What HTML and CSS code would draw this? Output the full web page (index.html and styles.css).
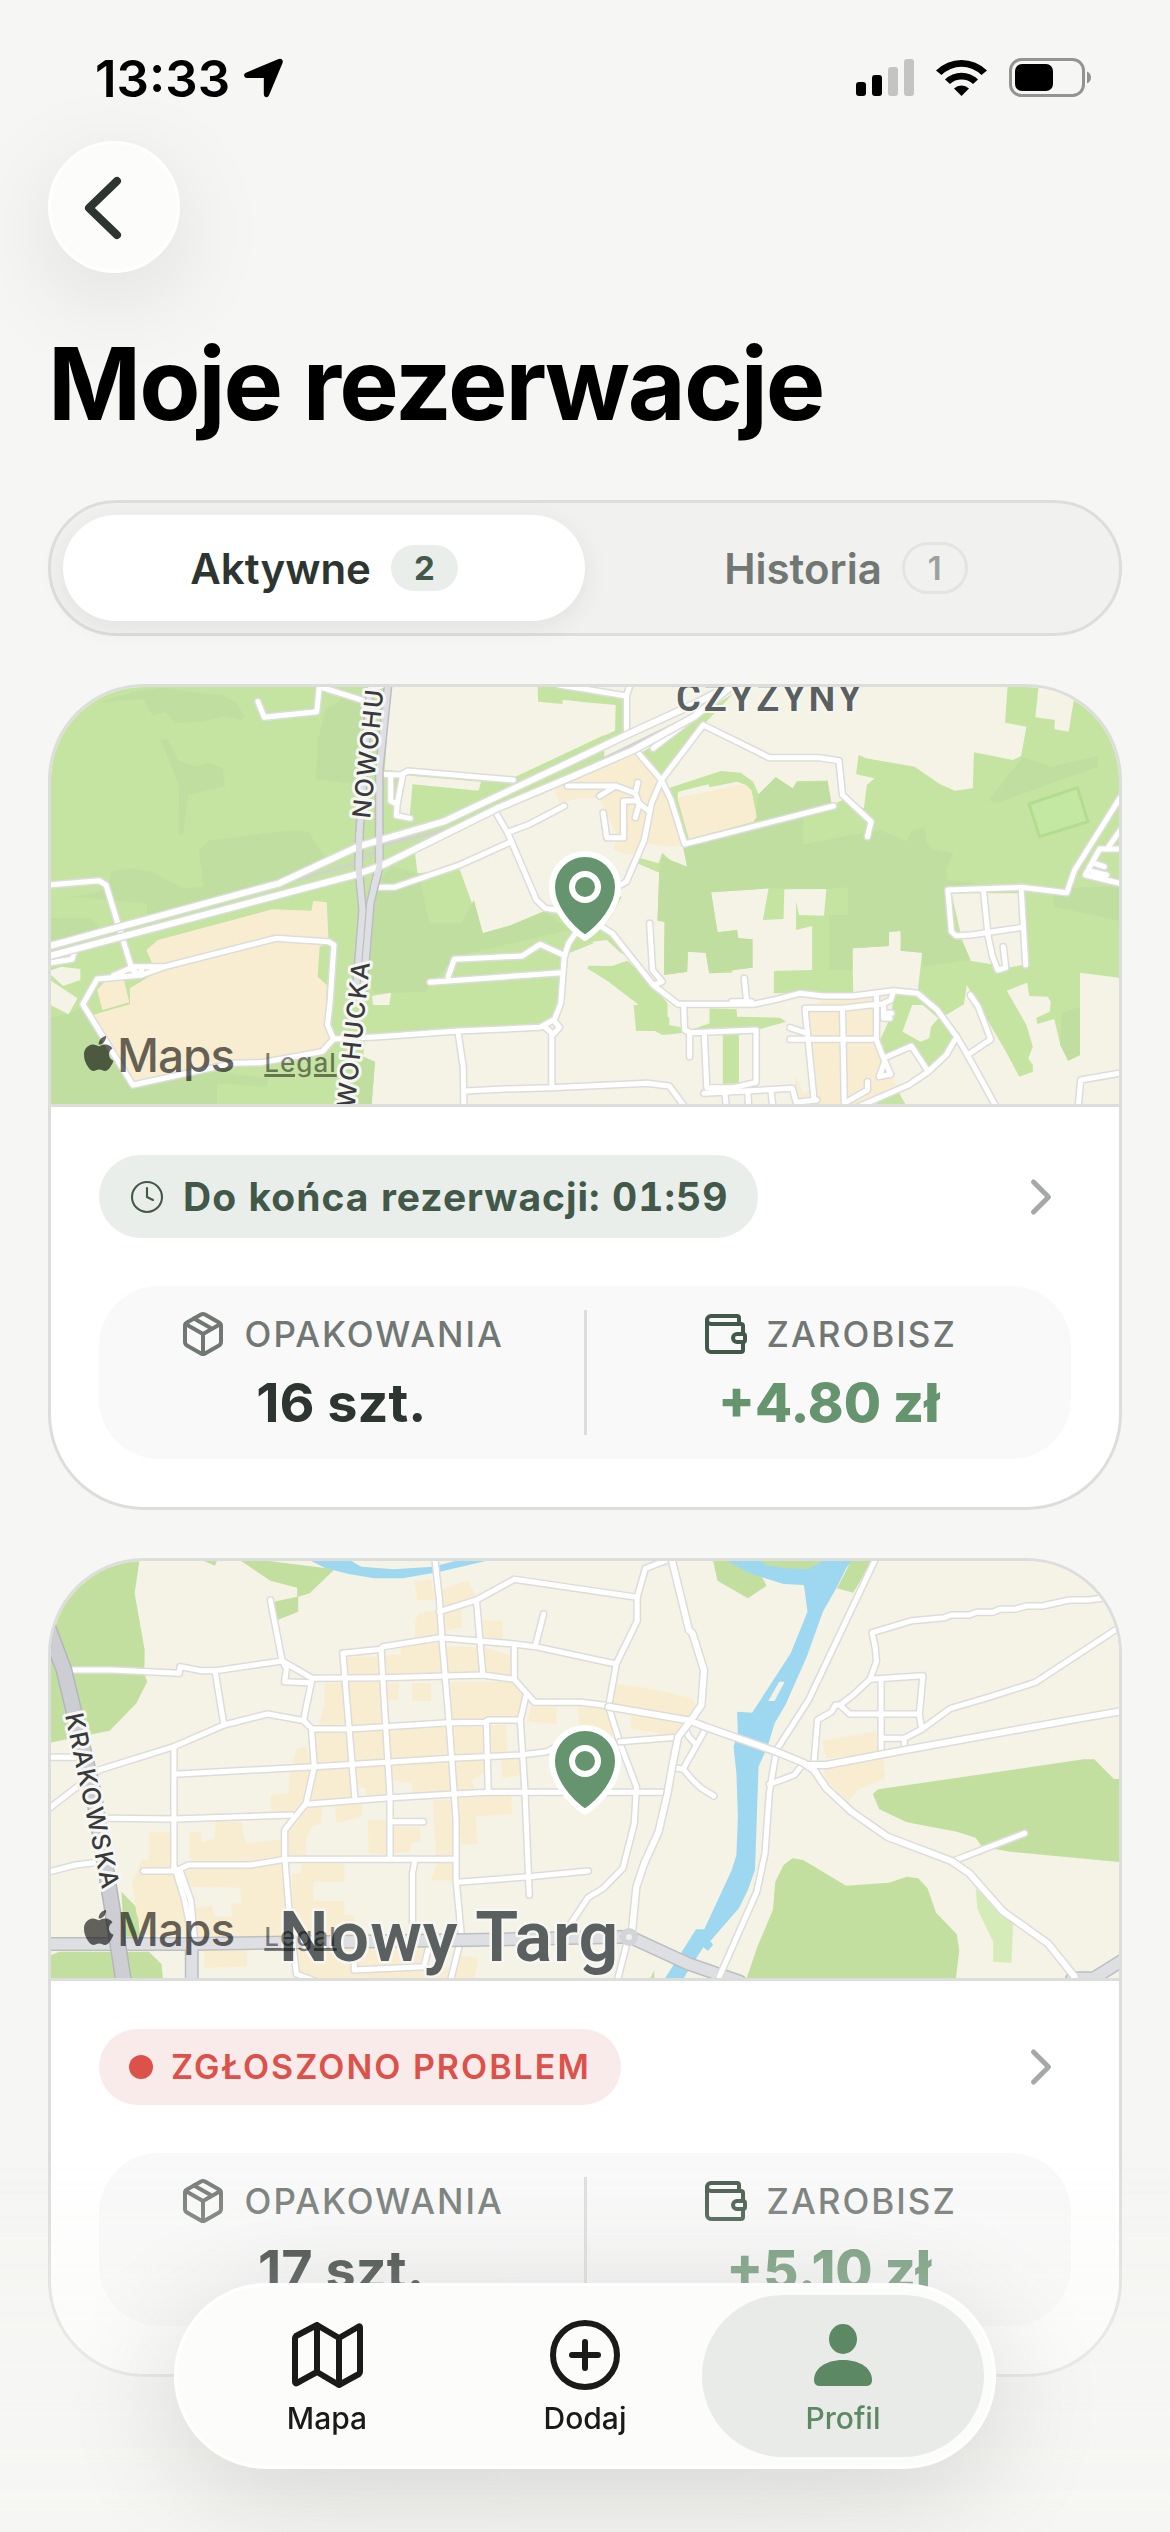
FILE: index.html
```html
<!DOCTYPE html>
<html lang="pl">
<head>
  <meta charset="UTF-8" />
  <meta name="viewport" content="width=device-width, initial-scale=1" />
  <title>Moje rezerwacje</title>
  <link rel="stylesheet" href="styles.css">
</head>
<body>

  <!-- shared icons -->
  <svg class="sprite" aria-hidden="true">
    <symbol id="i-package" viewBox="0 0 24 24">
      <path d="M11 21.73a2 2 0 0 0 2 0l7-4A2 2 0 0 0 21 16V8a2 2 0 0 0-1-1.73l-7-4a2 2 0 0 0-2 0l-7 4A2 2 0 0 0 3 8v8a2 2 0 0 0 1 1.73z"/>
      <path d="M12 22V12M3.29 7 12 12l8.71-5M7.5 4.27l9 5.15"/>
    </symbol>
    <symbol id="i-wallet" viewBox="0 0 24 24">
      <path d="M19 7V4a1 1 0 0 0-1-1H5a2 2 0 0 0 0 4h15a1 1 0 0 1 1 1v4h-3a2 2 0 0 0 0 4h3a1 1 0 0 0 1-1v-2a1 1 0 0 0-1-1"/>
      <path d="M3 5v14a2 2 0 0 0 2 2h15a1 1 0 0 0 1-1v-4"/>
    </symbol>
    <symbol id="i-chevron" viewBox="0 0 24 24"><path d="m9 18 6-6-6-6"/></symbol>
    <symbol id="i-pin" viewBox="0 0 72 90">
      <path d="M36 87C52 76 69 56 69 36a33 33 0 0 0-66 0c0 20 17 40 33 51z" fill="#66946e" stroke="#fff" stroke-width="6" stroke-linejoin="round"/>
      <circle cx="36" cy="36" r="13" fill="none" stroke="#fff" stroke-width="6"/>
    </symbol>
    <symbol id="i-apple" viewBox="0 0 30 36">
      <path d="M22 0c.3 2.200-.6 4.300-1.900 5.900-1.300 1.600-3.400 2.800-5.400 2.700-.3-2.100.7-4.300 1.900-5.700C18 1.300 20.200.1 22 0zM28.500 12.500c-2.200 1.300-3.500 3.300-3.500 6 0 3 1.800 5.300 4.500 6.300-.6 1.900-1.500 3.700-2.700 5.400-1.600 2.300-3.200 4.700-5.700 4.700-2.400 0-3.100-1.500-5.900-1.500-2.700 0-3.600 1.500-5.800 1.600-2.400.1-4.200-2.500-5.800-4.800C.4 25.700-1.700 17.300 1.700 12.600c1.600-2.400 4.300-3.900 7.200-4 2.300 0 4.400 1.600 5.900 1.600 1.400 0 4-1.900 6.800-1.600 1.200 0 4.800.5 6.900 3.900z"/>
    </symbol>
  </svg>

  <div class="status-bar">
    <div class="status-left">
      <span>13:33</span>
      <svg width="42" height="42" viewBox="0 0 42 42" aria-hidden="true"><path d="M37 3c1.800-.8 3.300.6 2.600 2.500L26 38c-.8 1.800-3.200 1.500-3.200-.7V21c0-.7-.3-1-1-1H5c-2.200 0-2.600-2.500-.7-3.400z" stroke="#000" stroke-width="2" stroke-linejoin="round"/></svg>
    </div>
    <div class="status-right" aria-hidden="true">
      <svg width="58" height="40" viewBox="0 0 58 40">
        <rect x="0" y="24" width="10" height="14" rx="3"/>
        <rect x="16" y="17" width="10" height="21" rx="3"/>
        <rect x="32" y="9" width="10" height="29" rx="3" fill="#c4c5c3"/>
        <rect x="48" y="1" width="10" height="37" rx="3" fill="#c4c5c3"/>
      </svg>
      <svg width="51" height="40" viewBox="0 0 51 40">
        <path d="M0 12.500a36 36 0 0 1 51 0L45.500 17a28.500 28.500 0 0 0-40 0z"/>
        <path d="M9 21.500a23.500 23.500 0 0 1 33 0L37 26a17 17 0 0 0-23 0z"/>
        <path d="M18 30.500a11 11 0 0 1 15 0L25.500 38z"/>
      </svg>
      <svg width="84" height="40" viewBox="0 0 84 40">
        <rect x="1.500" y="1.500" width="73" height="36" rx="11" fill="none" stroke="#939492" stroke-width="3"/>
        <rect x="6" y="6" width="38" height="27" rx="7"/>
        <path d="M78 13.500c2.500.8 4 3.200 4 6s-1.500 5.200-4 6z" fill="#939492"/>
      </svg>
    </div>
  </div>

  <main class="screen">
    <button class="back" type="button" aria-label="Wstecz">
      <svg width="66" height="66" viewBox="0 0 66 66"><path d="M36 7 8 34l28 27"/></svg>
    </button>

    <h1>Moje rezerwacje</h1>

    <div class="tabs" role="tablist">
      <button class="tab active" type="button" role="tab" aria-selected="true">Aktywne <span class="count">2</span></button>
      <button class="tab" type="button" role="tab" aria-selected="false">Historia <span class="count">1</span></button>
    </div>

    <article class="card">
      <div class="map">
        <svg class="map-art" viewBox="0 0 1068 417" preserveAspectRatio="xMidYMid slice" aria-hidden="true">
          <defs>
            <g id="a-main">
              <path d="M20 830 670 640 890 530 1130 455 1512 262 1642 195 1842 97 1935 45M20 860 230 800 890 612 960 585 1280 415 1512 310 1662 240 1832 140 1940 45"/>
            </g>
            <g id="a-west">
              <path d="M610 95 628 142 775 125 782 50 915 95M958 313 1010 315 1030 303 1325 330M982 315V393L1000 403 998 437 1037 445M1015 318 1000 403M945 652H992L1175 585 1320 515M1275 425 1310 490 1390 690 1415 715 1445 720M1310 487 1370 463 1468 408"/>
              <path d="M20 645 165 632 185 645 258 900 285 915M20 880 90 868 95 850M160 927 285 915 350 890 660 805 808 815 823 825 812 1000 805 1065 822 1107 790 1145 620 1178 540 1180 260 1245 120 1003zM205 917 262 890H350M285 895V915"/>
              <path d="M822 1107 950 1100 1170 1083 1400 1072 1437 1050 1455 1072 1437 1093 1415 1072M1170 1083 1185 1190 1187 1310M1190 1263 1300 1257 1430 1253 1700 1240 1762 1248 1805 1310M1433 1090V1253M1440 1050 1458 1000 1468 860 1480 820 1512 770M1143 920 1160 868 1350 858 1400 823 1470 857M1092 937 1460 908"/>
            </g>
            <g id="a-east">
              <path d="M130 190V78L0 55-60 45M130 78 140 45M205 235 320 140M160 245 228 330 255 390 293 522 710 408M345 165 228 330 200 400 180 510 130 635 105 650M345 165 530 263H670L725 272 735 375 815 455 805 500"/>
              <path d="M-35 348H100L155 370 165 400 195 425M55 378 100 348M162 338 155 370M155 443 165 405M155 393H122V503H75L65 428"/>
              <path d="M60 770 90 790 205 945 275 1003H485L550 988 615 970 680 978H765L878 962 945 970 1000 1020 1055 1100 1085 1155 1165 1310M195 760 203 900 230 935 205 945M460 925 467 1000M425 995H480"/>
              <path d="M290 1003 293 1080 310 1088 493 1080V1237L430 1253H355L348 1095M307 1088V1160M347 1270 595 1255 605 1297 663 1290M405 1265 410 1310M470 1265 472 1310M535 1265 540 1310"/>
              <path d="M655 1285 630 1015H735L830 1003V1110L850 1165 928 1128 975 1205M735 1015 740 1300 805 1260V1235M588 1108H830M588 1073 635 1090M830 975V1003H845L870 990 878 965M850 1003 850 1045H868M853 1030H873M850 1165 870 1213 838 1220 853 1175M780 1310 920 1245 975 1205 1025 1155 1055 1100M1085 1155 1150 1108 1115 1010 1093 975"/>
              <path d="M1363 668 1235 652 1030 660 1040 785 1053 797 1095 795 1240 772M1130 665 1143 800 1155 860 1170 900 1192 893 1185 830M1235 652 1248 885M1363 668 1385 600 1520 370M1520 642 1415 615 1455 537H1520M1480 530 1520 470M1440 580 1468 590M1435 605 1475 615M1395 1310 1402 1230 1520 1208"/>
            </g>
          </defs>
          <rect class="land" width="1068" height="417"/>

          <!-- west half: meadows and allotments -->
          <g transform="translate(-11 -17) scale(.35714 .33333)">
            <path class="green" d="M0 0H985L965 300 1322 325 1580 195V290L1270 420 1050 550 1057 610 1175 598 1240 790 1320 765 1415 722 1480 740 1550 820 1480 850 1465 1000 1440 1060 1165 1080 910 1100 905 1160 938 1175 928 1310H0z"/>
            <path class="green" d="M1393 40H1460L1580 75V97L1463 90V102L1395 95z"/>
            <path class="green-dark" d="M165 97 290 87 315 137 350 125 380 158 450 155 520 138 560 150 575 140 545 95 510 75 450 70 350 53 280 60zM337 208H357L387 272 440 290 470 278 512 295 518 348 415 375 400 495H388L390 350 365 280zM445 545 470 512 715 480 755 487 770 520 800 560 680 640 300 740V700L100 682 40 690 165 665 190 650 200 605 250 595 310 605 400 655 458 650zM20 745H140L175 780 20 830zM860 75 905 90 880 340 772 328 778 210 800 120zM20 1045 80 1032 120 1010 250 1240 490 1205 640 1225 635 1250 495 1240V1310H20zM940 640 985 590 1060 610 1090 760H1180L1215 690 1240 790 1320 765 1415 722 1480 780 1400 800 1160 860 1080 965 935 970 905 880zM905 1160 938 1175 928 1310H860z"/>
            <path class="land" d="M1010 315 1235 335 1228 362 1043 343 1035 440 1000 430zM20 905 60 890 113 897V930L65 948zM20 925 105 985 80 1033 20 1000zM930 978 983 968 978 1005H932z"/>
            <path class="sand" d="M298 840 330 810 650 718 760 722 765 692 803 697 808 815 783 830 777 920 803 945 800 1075 815 1105 780 1140 520 1185 260 1240 148 1035 252 1003V955L350 890 315 883zM160 960 180 935 235 930 250 997 175 1020zM1440 355 1580 290V385L1510 385 1455 400z"/>
          </g>

          <!-- east half: parkland, estates -->
          <g transform="translate(529 -17) scale(.35714 .33333)">
            <path class="green" d="M-60 50 0 62 120 85V190L0 240V230L98 182 100 105 0 95-60 85zM170 250 430 70 345 165 228 325z"/>
            <path class="green" d="M247 355 395 303 450 308 485 335 500 373 548 322 595 355 608 333 693 332 705 405 735 390 795 415 803 345 825 325 773 313 780 255 800 265 937 290 1008 343 1050 362 1100 355 1103 247 1212 270 1235 258 1250 170 1190 158 1198 40H1285L1275 142 1330 150 1328 178 1368 185 1383 90 1400 40H1520V925L1400 908V1155L1367 1172 1345 1125 1328 1047 1280 1062 1278 1043 1315 1025 1318 995 1310 980 1258 978 1252 938 1195 962 1250 1065 1268 1130 1255 1165 1268 1185V1205L1230 1220 1190 1140 1083 945 1075 1003 1025 1035 985 1000 945 970 958 848 898 842V783L865 785V828L763 835 765 970H543V903L650 900V768L605 780V695L613 735 683 737 690 657 572 658 570 747 512 750 528 655 367 667 385 787 440 780 443 805 483 808V893L427 898 425 908 362 910 352 848 302 845 300 905 235 915 237 755 217 752 222 608 160 580 165 563 220 580 230 548 255 572 300 590 287 525z"/>
            <path class="green-dark" d="M290 530 625 445 625 523 840 480 915 515 930 480 965 470 970 515 990 540 1045 550 1025 600 1030 630 1110 640 1030 655 1040 790 1080 830 1090 870 960 890 958 848 898 842V783L865 785V828L763 835V900H697V735H750V652L690 657 528 655 367 667 385 787 440 780 443 805 483 808V893L362 910 352 848 302 845 300 905 235 915 237 755 217 752 222 608 230 560 300 590zM500 373 548 322 595 355 608 380 622 430 490 460zM1145 390 1240 262 1320 290 1450 258 1448 290 1165 400zM1325 655 1520 650V755L1460 740 1325 710zM605 340 693 332 703 398 622 425 595 360zM1350 1030 1400 1010V1155L1367 1172 1345 1125z"/>
            <path class="pitch" d="M1257 402 1393 353 1422 455 1287 500z"/>
            <path class="green" d="M150 1005H165L80 935 20 895 25 887 90 888 133 872 200 940 245 1000V1040L310 1080 362 1060V1015L438 1018 440 1040 560 1043 577 1055 495 1080 445 1095V1240L400 1242V1095L295 1088 230 1095 210 1083 157 1083zM0 820 75 810 112 847 135 860 65 770 90 735 117 680 60 680-20 800zM840 1110 870 1040 880 975 945 970 1000 1020 1053 1100 975 1205 925 1130 850 1165zM815 1310 890 1262 915 1310z"/>
            <path class="land" d="M930 1005H960L1003 1045 983 1070 978 1105 953 1115 903 1085zM275 365 360 343 362 352 440 335 465 345 273 385zM1040 670H1235L1240 885 1205 892 1095 873 1070 810zM250 1010H362V1060L310 1078 250 1065z"/>
            <path class="sand" d="M-20 310 150 250 228 335 245 390 275 500 285 525 240 530 190 520 145 555 92 540 105 500 60 400 55 385H-20zM273 385 440 345H465L480 360 495 440 485 455 305 508zM640 1025 675 990 865 975 830 1060 850 1165 870 1210 885 1245 790 1310H602V1218L628 1270 655 1250z"/>
          </g>

          <g transform="translate(-11 -17) scale(.35714 .33333)">
            <path class="rail" d="M720 630 880 580 935 545M960 525 1200 465 1580 265 1800 150"/>
            <use href="#a-west" class="casing"/>
            <use href="#a-west" class="road"/>
          </g>
          <g transform="translate(529 -17) scale(.35714 .33333)">
            <use href="#a-east" class="casing"/>
            <use href="#a-east" class="road"/>
          </g>
          <g transform="translate(-11 -17) scale(.35714 .33333)">
            <path class="highway-edge" d="M975 40 950 300V590L925 700 905 960M925 40 895 480 892 590 903 720 885 960"/>
            <path class="highway" d="M975 40 950 300V590L925 700 905 960M925 40 895 480 892 590 903 720 885 960"/>
            <use href="#a-main" class="casing wide"/>
            <use href="#a-main" class="road wide"/>
            <path class="highway" d="M950 480V590L935 650M894 490 892 590 897 650"/>
          </g>
          <text class="street" transform="translate(319 132) rotate(-84)">NOWOHUCKA</text>
          <text class="street" transform="translate(319 274) rotate(-84)" text-anchor="end">NOWOHUCKA</text>
          <text class="district" x="625" y="24">CZYŻYNY</text>
        </svg>
        <svg class="pin" width="72" height="90"><use href="#i-pin"/></svg>
        <div class="attribution">
          <svg width="30" height="36"><use href="#i-apple"/></svg>
          <span class="brand">Maps</span>
          <a href="#">Legal</a>
        </div>
      </div>

      <div class="card-body">
        <div class="card-row">
          <span class="pill timer">
            <svg width="36" height="36" viewBox="0 0 24 24" aria-hidden="true"><circle cx="12" cy="12" r="10"/><path d="M12 6v6l4 2"/></svg>
            Do końca rezerwacji: 01:59
          </span>
          <a class="more" href="#" aria-label="Szczegóły rezerwacji"><svg width="60" height="60"><use href="#i-chevron"/></svg></a>
        </div>
        <div class="stats">
          <div class="stat">
            <div class="stat-label"><svg width="48" height="48"><use href="#i-package"/></svg>OPAKOWANIA</div>
            <div class="stat-value">16 szt.</div>
          </div>
          <div class="stat earn">
            <div class="stat-label"><svg width="48" height="48"><use href="#i-wallet"/></svg>ZAROBISZ</div>
            <div class="stat-value">+4.80 zł</div>
          </div>
        </div>
      </div>
    </article>

    <article class="card">
      <div class="map">
        <svg class="map-art" viewBox="0 0 1068 417" preserveAspectRatio="xMidYMid slice" aria-hidden="true">
          <defs>
            <g id="b-west">
              <path d="M1105 50 1118 175 1125 290 1145 540 1165 840V1020L1180 1190 1150 1320M1118 215 1222 180 1328 118 1672 172M1222 180 1240 405M1410 222 1387 318M848 340 955 328 960 320 1120 293 1328 312 1387 320 1612 372M1328 312V415"/>
              <path d="M92 390H200L390 400 392 380 450 392H492L678 363 762 415 958 413 1240 405 1328 418 1385 487H1515L1592 497M645 180 678 363 690 385 685 425 755 428M20 810 165 690 375 620 515 555 637 522 738 542 762 567H865L1145 548 1245 547 1255 540H1345"/>
              <path d="M490 392 515 555M762 415 738 540M760 567 768 680 745 790 685 870V945L697 1110 718 1302 775 1325M848 340 865 560 882 778M955 328 980 770V955M1250 547 1255 755M1360 470 1345 540 1358 755 1370 1065"/>
              <path d="M375 703 768 680 1150 655 1345 645 1420 635 1445 620M745 793 980 773 1160 762 1255 757H1750M375 620V990M195 835 375 837 705 825M980 845H1073M290 993H380L415 975H590L685 958H1165M1050 960 1043 1000V1145M1170 1027 1370 1010 1535 993"/>
              <path d="M378 985 405 1080 425 1190M392 990 422 1080 432 1190M20 652H110M20 997 100 975 150 968M880 1260V1290L1075 1280 1090 1215M1480 1160 1535 1072 1577 1045 1632 985 1664 850 1670 740 1624 610 1592 500 1614 370 1672 243V172L1695 85 1757 60"/>
            </g>
            <g id="b-east">
              <path d="M828 55 640 480 550 630 530 760 518 940 495 1055 390 1310M112 605 270 592M295 570 305 590 325 615M350 570 290 685M262 683 290 688 315 720 340 745 375 768M530 733 600 705 625 672"/>
              <path d="M655 670 665 540 705 515 715 495H728L755 522H950M728 495 765 465 812 418 960 407 950 525 957 568M812 418 830 365 827 325 818 278 930 242 1020 233 1040 225H1090L1110 217H1155L1175 208 1220 207 1250 198H1295L1370 180H1425L1480 172M843 418V640M850 595H908L957 568 1038 505 1150 470 1275 427 1520 255M908 595V625M1040 965 1245 880M105 1320 130 1215"/>
            </g>
            <g id="b-main">
              <path d="M255 50 305 270 315 280 347 390 340 495 308 545 275 590 258 680 245 760 220 875 180 970 158 1040 145 1180M80 500 308 542 350 560 550 635 625 668 655 690 690 745 760 815 860 890 1040 963 1090 1000 1185 1115 1310 1210 1385 1310M635 675 690 675 910 630 1400 535 1520 513"/>
            </g>
          </defs>
          <rect class="land" width="1068" height="417"/>

          <!-- town centre blocks -->
          <g transform="translate(-11 -21) scale(.35714 .33333)">
            <path class="green-mid" d="M20 50H280L265 160 293 330 292 400 300 425 270 490 195 572 20 610zM430 50H500L490 77zM545 50 825 88 755 160 723 170V215L665 240 655 185 720 170V143L645 122zM228 1055 273 1105 280 1190H235zM20 1250 55 1235H305L340 1272 345 1320H20z"/>
            <path class="sand" d="M1047 125 1095 117 1107 178 1057 182zM1123 150 1198 120 1222 170 1125 205zM1060 220 1110 210 1125 290 1050 292V245zM1122 215 1180 200V262L1125 275zM1240 240 1295 243V305H1240zM860 350H950L955 405 862 403zM965 345 1010 345V320L1120 300 1130 405H960zM1135 320H1230L1235 405H1135zM1245 322 1325 350V405H1245z"/>
            <path class="sand" d="M797 430H850L865 560H760L780 555 797 490zM860 425H950L960 555 870 560zM970 430H1005V480H975zM1042 430H1095V483H1042zM1140 425H1325L1360 475 1345 535H1250L1145 545zM1375 500H1447V553L1365 545zM1505 500H1590L1605 590 1512 560z"/>
            <path class="sand" d="M770 580 865 575 870 665 770 672zM875 575 960 570 970 660 878 665zM975 565 1140 560 1150 650 975 660zM1150 560H1245L1250 645 1155 648zM1258 555H1305L1310 640 1260 645zM720 625 745 620 760 680 740 785 700 840 685 815H648L645 765 695 760 700 690zM775 688 868 685 880 775 750 785zM885 680H970V760L915 770 912 745 890 740zM985 675 1150 665 1155 755 1045 760 1040 730 985 720zM1165 665 1245 660 1250 690 1210 720 1215 745 1240 760H1165zM1290 655H1345V705L1295 715z"/>
            <path class="sand" d="M1165 775 1320 765V822L1220 830 1225 912 1180 915zM1100 780H1150L1160 950V1022L1095 1020 1110 975zM918 840H975V945L920 940zM985 860H1065V905L1040 910 1035 937 990 940zM690 870 745 800H790V850L760 860 745 900V950L690 945zM825 790 905 785 900 830 830 850z"/>
            <path class="sand" d="M258 1025 285 960H305V877H365L370 970 400 1080 420 1185H290L270 1120zM418 875H450L453 908 490 895 492 845H565L570 885 580 910 680 897V955L590 970 425 975 418 930zM390 990 590 980 685 965 690 1090H565L560 1043 420 1040zM535 1090H690L710 1190H540zM430 1105 480 1095 490 1130H540V1190H430zM705 1000H730L732 970H852V1025H765V1083H852V1125H880V1190H710zM460 1230H580V1280L460 1283zM720 1230 1090 1220 1075 1275 1145 1280 1140 1320H730zM1165 1245 1228 1255 1215 1320H1155z"/>
            <path class="water" d="M735 50H850L900 80 990 88 1100 80 1210 50H1300L1120 95 1015 115H935L865 102 800 85z"/>
          </g>

          <!-- river and woods -->
          <g transform="translate(529 -21) scale(.35714 .33333)">
            <path class="green-mid" d="M370 50H420L510 110 522 138 470 175 385 122zM765 50H825L765 158 720 145zM820 762 835 748 1410 658H1440L1495 717H1520V967L1205 935 1125 920 1108 893 1055 875 915 847 838 808zM465 1320 495 1225 540 1110 547 1025 570 975 595 955 625 960 745 1037 865 1028 915 1010 947 1015 973 1045 997 1118 1055 1183 1062 1230 1052 1320zM195 1320 208 1290V1320z"/>
            <path class="green-light" d="M1108 1045 1213 1150 1208 1268 1157 1265V1205L1113 1108z"/>
            <path class="sand" d="M102 432 180 443 250 458 310 475 325 495 305 540 92 495zM145 525 300 545 270 590 138 565zM678 603 830 573 833 640 690 655zM680 690 850 657 855 715 780 748 750 785 690 720z"/>
            <path class="water" d="M390 50H770L745 85 720 140 680 215 635 350 575 495 545 550 525 620 500 680 490 990 470 1050 445 1105 365 1203 373 1215 358 1232 345 1222 287 1320H235L325 1168H348L425 990 438 945 442 830 438 700 430 620 442 580 440 515 482 518 590 340 637 215 627 135 570 132 475 100z"/>
            <path class="green-mid" d="M490 50 520 75 575 85 640 87 700 50z"/>
            <path class="land" d="M558 425H573L545 483H527z"/>
          </g>

          <g transform="translate(-11 -21) scale(.35714 .33333)">
            <use href="#b-west" class="casing"/>
            <use href="#b-west" class="road"/>
            <path class="highway-edge bold" d="M20 1212H420L1200 1200 1650 1190 1812 1270 1960 1325M425 1212V1320M2890 1315H2950L3040 1255"/>
            <path class="highway bold" d="M20 1212H420L1200 1200 1650 1190 1812 1270 1960 1325M425 1212V1320M2890 1315H2950L3040 1255"/>
            <path class="trunk-edge" d="M25 270 67 390 150 760 200 1090 235 1330"/>
            <path class="trunk" d="M25 270 67 390 150 760 200 1090 235 1330"/>
          </g>
          <g transform="translate(529 -21) scale(.35714 .33333)">
            <use href="#b-east" class="casing"/>
            <use href="#b-east" class="road"/>
            <use href="#b-main" class="casing wide"/>
            <use href="#b-main" class="road wide"/>
          </g>
          <circle cx="578" cy="376" r="6" fill="#eef0ec" stroke="#d3d4d8" stroke-width="6"/>
          <text class="street" transform="translate(14 154) rotate(78)">KRAKOWSKA</text>
          <text class="town" x="228" y="400">Nowy Targ</text>
        </svg>
        <svg class="pin" width="72" height="90"><use href="#i-pin"/></svg>
        <div class="attribution">
          <svg width="30" height="36"><use href="#i-apple"/></svg>
          <span class="brand">Maps</span>
          <a href="#">Legal</a>
        </div>
      </div>

      <div class="card-body">
        <div class="card-row">
          <span class="pill problem"><span class="dot"></span>ZGŁOSZONO PROBLEM</span>
          <a class="more" href="#" aria-label="Szczegóły rezerwacji"><svg width="60" height="60"><use href="#i-chevron"/></svg></a>
        </div>
        <div class="stats">
          <div class="stat">
            <div class="stat-label"><svg width="48" height="48"><use href="#i-package"/></svg>OPAKOWANIA</div>
            <div class="stat-value">17 szt.</div>
          </div>
          <div class="stat earn">
            <div class="stat-label"><svg width="48" height="48"><use href="#i-wallet"/></svg>ZAROBISZ</div>
            <div class="stat-value">+5.10 zł</div>
          </div>
        </div>
      </div>
    </article>
  </main>

  <div class="fade"></div>

  <nav class="tabbar">
    <a href="#">
      <svg width="72" height="72" viewBox="0 0 72 72" class="line"><path d="M4 19v44c0 1 1 2 2 1l20-11 22 13 20-11c1-1 1-1 1-2V9c0-2-1-2-2-1L48 19 26 6 5 17c-1 1-1 1-1 2zM26 6v47M48 19v47"/></svg>
      Mapa
    </a>
    <a href="#">
      <svg width="72" height="72" viewBox="0 0 72 72" class="line"><circle cx="36" cy="36" r="32"/><path d="M36 23v26M23 36h26"/></svg>
      Dodaj
    </a>
    <a href="#" class="active" aria-current="page">
      <svg width="72" height="72" viewBox="0 0 72 72" fill="currentColor"><ellipse cx="36" cy="20" rx="14" ry="15"/><path d="M7 61c0-11 11-20 29-20s29 9 29 20c0 4-2 6-6 6H13c-4 0-6-2-6-6z"/></svg>
      Profil
    </a>
  </nav>

</body>
</html>
```
FILE: styles.css
```css
* {
  box-sizing: border-box;
}

body {
  margin: 0;
  min-height: 100vh;
  font-family: Inter, "Liberation Sans", sans-serif;
  background: #f6f6f4;
  color: #2d3530;
}

button {
  font: inherit;
  border: none;
  cursor: pointer;
}

a {
  color: inherit;
  text-decoration: none;
}

svg {
  display: block;
  flex: none;
}

.sprite {
  position: absolute;
  width: 0;
  height: 0;
}

/* status bar */
.status-bar {
  display: flex;
  justify-content: space-between;
  align-items: center;
  height: 141px;
  padding: 15px 77px 0 95px;
  color: #000;
}

.status-left,
.status-right {
  display: flex;
  align-items: center;
}

.status-left {
  gap: 12px;
  font-size: 51px;
  font-weight: 600;
}

.status-right {
  gap: 22px;
}

/* header */
.screen {
  padding: 0 48px 96px;
}

.back {
  display: flex;
  align-items: center;
  justify-content: center;
  width: 132px;
  height: 132px;
  padding: 0;
  border: 3px solid #fff;
  border-radius: 50%;
  background: #fcfdfa;
  box-shadow: 0 24px 96px rgba(0, 0, 0, 0.1);
}

.back svg {
  fill: none;
  stroke: #2d3530;
  stroke-width: 8;
  stroke-linecap: round;
  stroke-linejoin: round;
}

h1 {
  margin: 51px 0 56px;
  font-size: 100px;
  font-weight: 700;
  line-height: 120px;
  letter-spacing: -2px;
  color: #000;
}

.tabs {
  display: flex;
  padding: 12px;
  border: 3px solid #dcdedb;
  border-radius: 68px;
  background: #f1f1ef;
  margin-bottom: 48px;
}

.tab {
  display: flex;
  flex: 1;
  align-items: center;
  justify-content: center;
  gap: 20px;
  height: 106px;
  padding: 0;
  border-radius: 53px;
  background: none;
  font-size: 42px;
  font-weight: 600;
  color: #717873;
}

.tab.active {
  background: #fff;
  color: #2d3530;
  box-shadow: 0 6px 24px rgba(45, 53, 48, 0.08);
}

.count {
  padding: 3px 23px;
  border: 3px solid #e4e5e2;
  border-radius: 26px;
  font-size: 33px;
  font-weight: 600;
  line-height: 40px;
  color: #9ca19d;
}

.tab.active .count {
  border: none;
  background: #e9eeea;
  font-weight: 700;
  color: #42594a;
}

/* reservation card */
.card {
  margin-bottom: 48px;
  border: 3px solid #dcdedb;
  border-radius: 96px;
  background: #fff;
  overflow: hidden;
}

.map {
  position: relative;
  border-bottom: 3px solid #dcdedb;
  overflow: hidden;
}

.map-art {
  width: 100%;
  aspect-ratio: 1068 / 417;
}

.map-art path {
  vector-effect: non-scaling-stroke;
}

.land { fill: #f5f2e6; }
.green { fill: #c5e4a1; }
.green-mid { fill: #c3dfa0; }
.green-dark { fill: #bfde9f; }
.green-light { fill: #d5ecb8; }
.sand { fill: #f9edd1; }
.water { fill: #9dd8f0; }

.pitch {
  fill: #c3e8a2;
  stroke: #b3dc90;
  stroke-width: 3;
}

.casing,
.road,
.rail,
.highway,
.highway-edge,
.trunk,
.trunk-edge {
  fill: none;
  stroke-linecap: round;
  stroke-linejoin: round;
}

.casing {
  stroke: #dcdddb;
  stroke-width: 8;
}

.road {
  stroke: #fff;
  stroke-width: 5;
}

.casing.wide { stroke-width: 9; }
.road.wide { stroke-width: 6; }

.rail {
  stroke: #d0d2cd;
  stroke-width: 3;
}

.highway-edge {
  stroke: #bcbec2;
  stroke-width: 9;
}

.highway {
  stroke: #dedfe3;
  stroke-width: 6;
}

.highway-edge.bold { stroke-width: 14; }
.highway.bold { stroke-width: 11; }

.trunk-edge {
  stroke: #b4b6ba;
  stroke-width: 17;
}

.trunk {
  stroke: #cdced3;
  stroke-width: 14;
}

.map-art text {
  paint-order: stroke;
  stroke: #f6f7f3;
  stroke-linejoin: round;
}

.street {
  font-size: 25px;
  font-weight: 500;
  letter-spacing: 2px;
  fill: #3a3a3c;
  stroke-width: 6px;
}

.district {
  font-family: Roboto, sans-serif;
  font-size: 38px;
  font-weight: 600;
  letter-spacing: 3px;
  fill: #5a5f60;
  stroke-width: 4px;
}

.town {
  font-family: Roboto, sans-serif;
  font-size: 70px;
  font-weight: 600;
  letter-spacing: 1px;
  fill: #5a5f60;
  stroke-width: 5px;
}

.pin {
  position: absolute;
  top: 50%;
  left: 50%;
  margin: -45px 0 0 -36px;
}

.attribution {
  position: absolute;
  left: 33px;
  bottom: 22px;
  display: flex;
  align-items: baseline;
  color: rgba(0, 0, 0, 0.6);
}

.attribution svg {
  fill: currentColor;
}

.brand {
  margin: 0 30px 0 3px;
  font-size: 46px;
  font-weight: 500;
  line-height: 54px;
  letter-spacing: -1px;
}

.attribution a {
  font-size: 26px;
  font-weight: 500;
  letter-spacing: 1px;
  text-decoration: underline;
  text-decoration-thickness: 3px;
  opacity: 0.8;
}

.card-body {
  padding: 48px;
}

.card-row {
  display: flex;
  align-items: center;
  justify-content: space-between;
  margin-bottom: 48px;
}

.pill {
  display: flex;
  align-items: center;
  gap: 18px;
  padding: 18px 30px;
  border-radius: 42px;
  font-weight: 700;
}

.timer {
  background: #e9eeea;
  font-size: 39px;
  line-height: 47px;
  letter-spacing: 1px;
  font-variant-numeric: tabular-nums;
  color: #42594a;
}

.timer svg {
  fill: none;
  stroke: currentColor;
  stroke-width: 1.4;
  stroke-linecap: round;
}

.problem {
  background: #faebeb;
  font-size: 34px;
  font-weight: 600;
  line-height: 40px;
  letter-spacing: 2px;
  color: #dc524b;
}

.dot {
  width: 24px;
  height: 24px;
  border-radius: 50%;
  background: #dc524b;
}

.more svg,
.stat-label svg {
  fill: none;
  stroke: currentColor;
  stroke-width: 2;
  stroke-linecap: round;
  stroke-linejoin: round;
}

.more {
  margin: -12px 0;
  color: #a4a9a6;
}

.stats {
  display: flex;
  padding: 24px 0;
  border-radius: 60px;
  background: #f9f9f9;
}

.stat {
  display: flex;
  flex: 1;
  flex-direction: column;
  align-items: center;
  gap: 12px;
}

.stat + .stat {
  border-left: 3px solid #dcdedb;
}

.stat-label {
  display: flex;
  align-items: center;
  gap: 18px;
  font-size: 35px;
  font-weight: 500;
  line-height: 48px;
  letter-spacing: 2px;
  color: #717873;
}

.stat-value {
  font-size: 54px;
  font-weight: 700;
  line-height: 65px;
}

.earn .stat-label svg {
  color: #42594a;
}

.earn .stat-value {
  font-weight: 800;
  color: #66946e;
}

/* bottom navigation */
.fade {
  position: fixed;
  left: 0;
  right: 0;
  bottom: 0;
  height: 380px;
  background: linear-gradient(rgba(246, 246, 244, 0), rgba(246, 246, 244, 0.9));
  pointer-events: none;
}

.tabbar {
  position: fixed;
  left: 0;
  right: 0;
  bottom: 63px;
  display: flex;
  max-width: 822px;
  margin: 0 auto;
  padding: 9px 21px;
  border: 3px solid #fff;
  border-radius: 93px;
  background: #fcfdfa;
  box-shadow: 0 24px 120px rgba(0, 0, 0, 0.14);
}

.tabbar a {
  display: flex;
  flex: 1;
  flex-direction: column;
  align-items: center;
  gap: 9px;
  margin: 0 -12px;
  padding: 24px 0 21px;
  border-radius: 81px;
  font-size: 30px;
  font-weight: 500;
  line-height: 36px;
  color: #1a1a18;
}

.tabbar a.active {
  background: #e9ebe8;
  color: #5c8963;
}

.line {
  fill: none;
  stroke: currentColor;
  stroke-width: 6;
  stroke-linecap: round;
  stroke-linejoin: round;
}
```
